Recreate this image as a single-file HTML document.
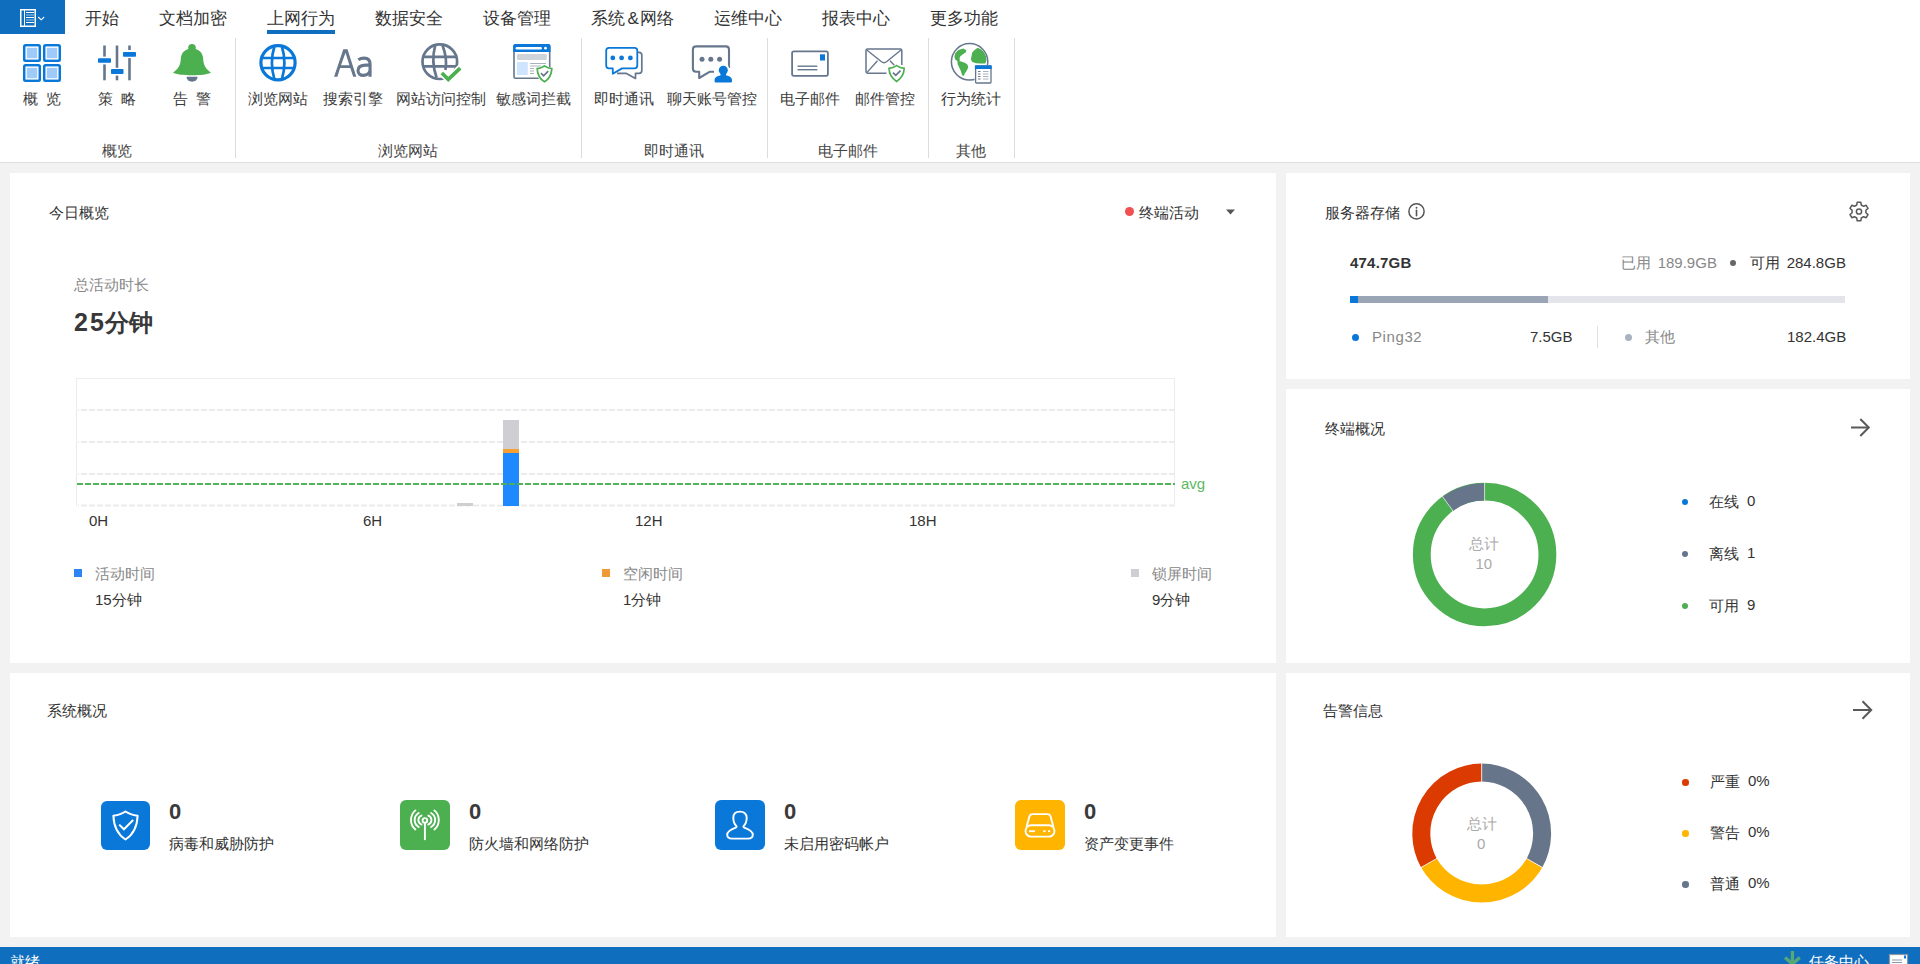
<!DOCTYPE html><html><head><meta charset="utf-8"><style>
html,body{margin:0;padding:0}
body{width:1920px;height:964px;position:relative;overflow:hidden;background:#f2f2f2;font-family:"Liberation Sans",sans-serif;color:#333}
.t{position:absolute;white-space:nowrap;line-height:1}
.a{position:absolute}
svg{position:absolute;overflow:visible}
#top{position:absolute;left:0;top:0;width:1920px;height:162px;background:#fff;border-bottom:1px solid #dedede}
.tab{font-size:17px;top:10px;color:#333}
.lbl{font-size:15px;top:91px;color:#3c3c3c}
.grp{font-size:15px;top:143px;color:#444}
.sep{position:absolute;top:38px;width:1px;height:120px;background:#dcdcdc}
.card{position:absolute;background:#fff}
</style></head><body>
<div id="top">
  <div class="a" style="left:0;top:0;width:65px;height:34px;background:#106ebe"></div>
  <svg style="left:0;top:0" width="65" height="34" viewBox="0 0 65 34">
    <rect x="20.75" y="9.75" width="14.5" height="16.5" fill="none" stroke="#fff" stroke-width="1.5"/>
    <line x1="24.5" y1="10" x2="24.5" y2="26" stroke="#fff" stroke-width="1"/>
    <g stroke="#fff" stroke-width="1">
      <line x1="26" y1="12.5" x2="34" y2="12.5"/><line x1="26" y1="15" x2="34" y2="15" stroke-opacity=".6"/>
      <line x1="26" y1="17.5" x2="34" y2="17.5"/><line x1="26" y1="20" x2="34" y2="20" stroke-opacity=".6"/>
      <line x1="26" y1="22.5" x2="34" y2="22.5"/>
    </g>
    <polyline points="38.2,17 41.2,19.8 44.2,17" fill="none" stroke="#fff" stroke-width="1.1"/>
  </svg>
  <div class="t tab" style="left:85px">开始</div>
  <div class="t tab" style="left:159px">文档加密</div>
  <div class="t tab" style="left:267px">上网行为</div>
  <div class="a" style="left:267px;top:30px;width:68px;height:4px;background:#106ebe"></div>
  <div class="t tab" style="left:375px">数据安全</div>
  <div class="t tab" style="left:483px">设备管理</div>
  <div class="t tab" style="left:591px">系统<span style="padding:0 1.5px 0 2.5px">&amp;</span>网络</div>
  <div class="t tab" style="left:714px">运维中心</div>
  <div class="t tab" style="left:822px">报表中心</div>
  <div class="t tab" style="left:930px">更多功能</div>

  <div class="sep" style="left:235px"></div>
  <div class="sep" style="left:581px"></div>
  <div class="sep" style="left:767px"></div>
  <div class="sep" style="left:928px"></div>
  <div class="sep" style="left:1014px"></div>

  <div class="t lbl" style="left:23px">概</div><div class="t lbl" style="left:46px">览</div>
  <div class="t lbl" style="left:98px">策</div><div class="t lbl" style="left:121px">略</div>
  <div class="t lbl" style="left:173px">告</div><div class="t lbl" style="left:196px">警</div>
  <div class="t lbl" style="left:248px">浏览网站</div>
  <div class="t lbl" style="left:323px">搜索引擎</div>
  <div class="t lbl" style="left:396px">网站访问控制</div>
  <div class="t lbl" style="left:496px">敏感词拦截</div>
  <div class="t lbl" style="left:594px">即时通讯</div>
  <div class="t lbl" style="left:667px">聊天账号管控</div>
  <div class="t lbl" style="left:780px">电子邮件</div>
  <div class="t lbl" style="left:855px">邮件管控</div>
  <div class="t lbl" style="left:941px">行为统计</div>

  <div class="t grp" style="left:102px">概览</div>
  <div class="t grp" style="left:378px">浏览网站</div>
  <div class="t grp" style="left:644px">即时通讯</div>
  <div class="t grp" style="left:818px">电子邮件</div>
  <div class="t grp" style="left:956px">其他</div>
    <svg style="left:0;top:0" width="1100" height="100" viewBox="0 0 1100 100">
    <!-- grid -->
    <g fill="#9ecbfa" stroke="#0a78d8" stroke-width="2.6">
      <rect x="24.3" y="45.3" width="15.4" height="15.4" rx="1.2"/>
      <rect x="44.3" y="45.3" width="15.4" height="15.4" rx="1.2"/>
      <rect x="24.3" y="65.3" width="15.4" height="15.4" rx="1.2"/>
      <rect x="44.3" y="65.3" width="15.4" height="15.4" rx="1.2"/>
    </g>
    <g fill="none" stroke="#fff" stroke-width="1.2">
      <rect x="26.2" y="47.2" width="11.6" height="11.6"/>
      <rect x="46.2" y="47.2" width="11.6" height="11.6"/>
      <rect x="26.2" y="67.2" width="11.6" height="11.6"/>
      <rect x="46.2" y="67.2" width="11.6" height="11.6"/>
    </g>
    <!-- sliders -->
    <g stroke="#66768c" stroke-width="2.6">
      <line x1="104.5" y1="45.5" x2="104.5" y2="56.6"/><line x1="104.5" y1="64.4" x2="104.5" y2="80.3"/>
      <line x1="117" y1="45.5" x2="117" y2="67.8"/><line x1="117" y1="75.6" x2="117" y2="80.3"/>
      <line x1="129.5" y1="45.5" x2="129.5" y2="50"/><line x1="129.5" y1="58.1" x2="129.5" y2="80.3"/>
    </g>
    <g fill="#0a78d8">
      <rect x="98" y="58.2" width="13" height="4.6" rx=".8"/>
      <rect x="111" y="69" width="12.5" height="5" rx=".8"/>
      <rect x="123" y="52" width="13" height="4.8" rx=".8"/>
    </g>
    <!-- bell -->
    <circle cx="192" cy="47.8" r="3.8" fill="#4caf50"/>
    <path d="M192 48.5 C186 48.5 181 52 180.8 59 C180.6 66 177 70 173 72.5 C176 74.6 184 75.2 192 75.2 C200 75.2 208 74.6 211 72.5 C207 70 203.4 66 203.2 59 C203 52 198 48.5 192 48.5 Z" fill="#4caf50"/>
    <path d="M186.5 76.8 L197.6 76.8 A5.55 5 0 0 1 186.5 76.8 Z" fill="#66768c"/>
    <!-- globe blue -->
    <g fill="none" stroke="#0a78d8">
      <circle cx="278" cy="62.8" r="17.1" stroke-width="3.2"/>
      <path d="M274.5 46 Q269.3 62.8 274.5 79.6" stroke-width="2.7"/>
      <path d="M281.8 46 Q287 62.8 281.8 79.6" stroke-width="2.7"/>
      <line x1="261" y1="57.9" x2="295" y2="57.9" stroke-width="2.5"/>
      <line x1="261" y1="67.9" x2="295" y2="67.9" stroke-width="2.5"/>
    </g>
    <!-- Aa -->
    <path fill="#66768c" fill-rule="evenodd" d="M334.1 76.7 L343.3 49.2 L347.5 49.2 L356.3 76.7 L353.2 76.7 L350.3 67.9 L340.1 67.9 L337.4 76.7 Z M341 65.2 L349.4 65.2 L345.5 52.7 Z"/>
    <g fill="none" stroke="#66768c" stroke-width="3.1">
      <path d="M358.3 59.7 C360 58.6 362 58.1 364.2 58.1 C368 58.1 370.05 60.2 370.05 64.2 L370.05 76.7"/>
      <path d="M370.05 65.1 L366 65.1 C360.6 65.1 358 67.4 358 70.6 C358 73.8 360.4 75.4 363.4 75.4 C366.6 75.4 368.9 73.6 370.05 71.2"/>
    </g>
    <!-- globe gray + check -->
    <g fill="none" stroke="#66768c" stroke-width="2.7">
      <circle cx="439.8" cy="61.7" r="17.3"/>
      <path d="M435.2 45.5 Q430.8 61.5 436.6 77.8"/>
      <path d="M442.6 45.5 Q447.6 59 445.4 70"/>
      <line x1="423" y1="56.8" x2="456.5" y2="56.8"/>
      <line x1="423" y1="66.4" x2="456.5" y2="66.4"/>
    </g>
    <polyline points="441.8,73 448.3,79.4 460.2,68.1" fill="none" stroke="#fff" stroke-width="7"/>
    <polyline points="441.8,73 448.3,79.4 460.2,68.1" fill="none" stroke="#4caf50" stroke-width="3.6"/>
    <!-- browser + shield -->
    <rect x="514" y="45" width="35.7" height="33.3" rx="1.5" fill="#fff" stroke="#66768c" stroke-width="1.6"/>
    <path d="M513.2 46 Q513.2 44.1 515.2 44.1 L548.5 44.1 Q550.5 44.1 550.5 46 L550.5 52 L513.2 52 Z" fill="#0a78d8"/>
    <rect x="515.6" y="46.9" width="26.3" height="2.6" rx="1.3" fill="#fff"/>
    <circle cx="545.5" cy="48.2" r="1.4" fill="#fff"/>
    <rect x="516.9" y="54" width="29.9" height="6" rx="1.2" fill="#cfd3da"/>
    <rect x="516.9" y="62" width="10.9" height="13.1" rx=".8" fill="#cfe5ff"/>
    <g stroke="#a9b2bf" stroke-width="1">
      <line x1="530" y1="63.5" x2="546" y2="63.5"/><line x1="530" y1="66" x2="541" y2="66"/>
      <line x1="530" y1="68.5" x2="534" y2="68.5"/><line x1="530" y1="71" x2="534" y2="71"/><line x1="530" y1="73.5" x2="534" y2="73.5"/>
    </g>
    <path d="M544.5 64.5 C541.5 66.5 539 67.2 535.5 67.5 C535.5 75 538.5 80 544.5 83.5 C550.5 80 553.5 75 553.5 67.5 C550 67.2 547.5 66.5 544.5 64.5 Z" fill="#fff"/>
    <path d="M544.5 66 C542 67.6 540 68.3 537.2 68.6 C537.4 75 540 79 544.5 81.8 C549 79 551.6 75 551.8 68.6 C549 68.3 547 67.6 544.5 66 Z" fill="#fff" stroke="#4caf50" stroke-width="1.7"/>
    <polyline points="541,73.2 543.6,75.8 548.2,71.2" fill="none" stroke="#66768c" stroke-width="1.7"/>
    <!-- chat blue -->
    <path d="M633 52.3 L639 52.3 Q641.8 52.3 641.8 55 L641.8 70.5 Q641.8 73.3 639 73.3 L635.5 73.3 L635.5 78.5 L626 73.3 L617 73.3" fill="none" stroke="#66768c" stroke-width="1.7" stroke-linejoin="round"/>
    <path d="M609 47.8 L634.5 47.8 Q637.3 47.8 637.3 50.6 L637.3 65.6 Q637.3 68.4 634.5 68.4 L622 68.4 L612.8 73.8 L612.8 68.4 L609 68.4 Q606.2 68.4 606.2 65.6 L606.2 50.6 Q606.2 47.8 609 47.8 Z" fill="#fff" stroke="#0a78d8" stroke-width="1.8" stroke-linejoin="round"/>
    <g fill="#0a78d8"><circle cx="612.8" cy="57.9" r="2.4"/><circle cx="621.6" cy="57.9" r="2.4"/><circle cx="630.4" cy="57.9" r="2.4"/></g>
    <!-- chat + user -->
    <path d="M695.5 46.4 L725.8 46.4 Q729 46.4 729 49.6 L729 68 M714 71.8 L709.5 71.8 L699.2 78 L699.2 71.8 L696 71.8 Q692.9 71.8 692.9 68.6 L692.9 49.6 Q692.9 46.4 696 46.4" fill="none" stroke="#66768c" stroke-width="2.1" stroke-linejoin="round"/>
    <g fill="#66768c"><circle cx="702" cy="59.3" r="2.5"/><circle cx="710.8" cy="59.3" r="2.5"/><circle cx="719.6" cy="59.3" r="2.5"/></g>
    <circle cx="723.3" cy="69.6" r="6" fill="#fff"/>
    <circle cx="723.3" cy="70.2" r="4.5" fill="#0a78d8"/>
    <path d="M720.8 73.5 L725.8 73.5 L726.3 75.6 C729.6 76.2 732 77.6 732 80.2 L732 81.5 Q732 82.6 730.8 82.6 L715.8 82.6 Q714.6 82.6 714.6 81.5 L714.6 80.2 C714.6 77.6 717 76.2 720.3 75.6 Z" fill="#0a78d8"/>
    <!-- envelope -->
    <rect x="792.1" y="51.3" width="35.8" height="24.6" rx="1.8" fill="none" stroke="#66768c" stroke-width="1.8"/>
    <rect x="820" y="54.3" width="5" height="6.2" fill="#0a78d8"/>
    <g stroke="#66768c" stroke-width="1.4"><line x1="797.5" y1="66.2" x2="817.3" y2="66.2"/><line x1="797.5" y1="69.7" x2="817.3" y2="69.7"/></g>
    <!-- envelope + shield -->
    <path d="M886.5 73.2 L867.6 73.2 Q866 73.2 866 71.6 L866 50.6 Q866 49 867.6 49 L900.2 49 Q901.8 49 901.8 50.6 L901.8 65" fill="none" stroke="#66768c" stroke-width="1.5"/>
    <path d="M866.8 50 L881.5 61.8 Q884 63.6 886.5 61.8 L901 50" fill="none" stroke="#66768c" stroke-width="1.4"/>
    <line x1="866.8" y1="72.6" x2="877.5" y2="60.8" stroke="#66768c" stroke-width="1.4"/>
    <line x1="890" y1="60.8" x2="895" y2="66" stroke="#66768c" stroke-width="1.4"/>
    <path d="M896.6 64 C893.5 66 891 66.8 887.2 67 C887.2 74.5 890.3 79.5 896.6 83 C902.9 79.5 906 74.5 906 67 C902.3 66.8 899.7 66 896.6 64 Z" fill="#fff"/>
    <path d="M896.6 65.6 C894 67.3 892 68 889 68.3 C889.2 74.3 891.8 78.5 896.6 81.4 C901.4 78.5 904 74.3 904.2 68.3 C901.2 68 899.2 67.3 896.6 65.6 Z" fill="#fff" stroke="#4caf50" stroke-width="1.7"/>
    <polyline points="893,72.6 895.8,75.4 900.5,70.7" fill="none" stroke="#66768c" stroke-width="1.7"/>
    <!-- green globe + table -->
    <circle cx="969.6" cy="61.8" r="18.2" fill="none" stroke="#66768c" stroke-width="1.5"/>
    <g fill="#4caf50">
      <path d="M963.2 48.4 L966.4 50.2 L965.6 52.6 L962.6 54.6 L960.4 56.2 L959.4 58.4 L960.2 60.4 L957.6 61.2 L955.2 59.4 L954.4 56.6 L955.4 53 L958.4 50 Z"/>
      <path d="M957.4 60.8 L961.2 61.6 L964.8 62.8 L967.6 64.8 L968.2 67.4 L966.8 70.4 L964.8 73.4 L963.8 75.8 L962 75.2 L961 71.2 L959.2 67.4 L957.6 64 Z"/>
      <path d="M977.6 47.8 L981.2 49.4 L984.2 52.4 L986 56.6 L986.4 60.8 L985.2 63.4 L981 63.6 L976.2 63.2 L972.2 62 L970.8 59.2 L971.6 56 L972.2 52.6 L974.6 50 Z"/>
    </g>
    <rect x="974.5" y="65" width="17.5" height="19" fill="#fff"/>
    <rect x="975.6" y="66" width="15.4" height="17" rx=".8" fill="#fff" stroke="#66768c" stroke-width="1.3"/>
    <rect x="974.9" y="65.4" width="16.8" height="3.6" fill="#0a78d8"/>
    <g stroke="#66768c" stroke-width="1"><line x1="978" y1="71.5" x2="980.5" y2="71.5"/><line x1="978" y1="74" x2="980.5" y2="74"/><line x1="978" y1="76.5" x2="980.5" y2="76.5"/><line x1="978" y1="79" x2="980.5" y2="79"/></g>
    <g stroke="#a9b2bf" stroke-width="1"><line x1="983" y1="71.5" x2="988.5" y2="71.5"/><line x1="983" y1="74" x2="988.5" y2="74"/><line x1="983" y1="76.5" x2="988.5" y2="76.5"/><line x1="983" y1="79" x2="988.5" y2="79"/></g>
  </svg>

</div>
<div class="card" style="left:10px;top:173px;width:1266px;height:490px"></div>
<div class="card" style="left:1286px;top:173px;width:624px;height:206px"></div>
<div class="card" style="left:1286px;top:389px;width:624px;height:274px"></div>
<div class="card" style="left:10px;top:673px;width:1266px;height:264px"></div>
<div class="card" style="left:1286px;top:673px;width:624px;height:264px"></div>

<!-- card 1 -->
<div class="t" style="left:49px;top:205px;font-size:15px;color:#333">今日概览</div>
<div class="a" style="left:1125px;top:207px;width:9px;height:9px;border-radius:50%;background:#f0504f"></div>
<div class="t" style="left:1139px;top:205px;font-size:15px;color:#333">终端活动</div>
<svg style="left:1225px;top:208px" width="11" height="8"><polygon points="1,1.5 10,1.5 5.5,6.5" fill="#555"/></svg>
<div class="t" style="left:74px;top:277px;font-size:15px;color:#888">总活动时长</div>
<div class="t" style="left:74px;top:310px;font-size:25px;font-weight:bold;color:#383838;letter-spacing:2px">25</div><div class="t" style="left:105px;top:311px;font-size:24px;font-weight:bold;color:#383838">分钟</div>

<svg style="left:0;top:0" width="1280" height="620">
  <g stroke="#ececec" stroke-width="1">
    <line x1="76" y1="378.5" x2="1175" y2="378.5"/>
    <line x1="76.5" y1="378" x2="76.5" y2="506"/>
    <line x1="1174.5" y1="378" x2="1174.5" y2="506"/>
  </g>
  <g stroke="#ebebeb" stroke-width="1.8" stroke-dasharray="6 2" stroke-dashoffset="5">
    <line x1="78" y1="410" x2="1176" y2="410"/>
    <line x1="78" y1="442" x2="1176" y2="442"/>
    <line x1="78" y1="474" x2="1176" y2="474"/>
    <line x1="78" y1="505.5" x2="1176" y2="505.5"/>
  </g>
  <rect x="457" y="503" width="16" height="3" fill="#cfcfd3"/>
  <rect x="503" y="420" width="16" height="29" fill="#cfcfd3"/>
  <rect x="503" y="449" width="16" height="4" fill="#f7a030"/>
  <rect x="503" y="453" width="16" height="53" fill="#1e88ff"/>
  <line x1="77" y1="484" x2="1175" y2="484" stroke="#4caf50" stroke-width="2.2" stroke-dasharray="6 2" stroke-opacity=".95"/>
</svg>
<div class="t" style="left:1181px;top:476px;font-size:15px;color:#5cb860">avg</div>
<div class="t" style="left:89px;top:513px;font-size:15px;color:#333">0H</div>
<div class="t" style="left:363px;top:513px;font-size:15px;color:#333">6H</div>
<div class="t" style="left:635px;top:513px;font-size:15px;color:#333">12H</div>
<div class="t" style="left:909px;top:513px;font-size:15px;color:#333">18H</div>

<div class="a" style="left:74px;top:569px;width:8px;height:8px;background:#2c85f5"></div>
<div class="t" style="left:95px;top:566px;font-size:15px;color:#888">活动时间</div>
<div class="t" style="left:95px;top:592px;font-size:15px;color:#333">15分钟</div>
<div class="a" style="left:602px;top:569px;width:8px;height:8px;background:#ef9a36"></div>
<div class="t" style="left:623px;top:566px;font-size:15px;color:#888">空闲时间</div>
<div class="t" style="left:623px;top:592px;font-size:15px;color:#333">1分钟</div>
<div class="a" style="left:1131px;top:569px;width:8px;height:8px;background:#cfcfd3"></div>
<div class="t" style="left:1152px;top:566px;font-size:15px;color:#888">锁屏时间</div>
<div class="t" style="left:1152px;top:592px;font-size:15px;color:#333">9分钟</div>

<!-- storage card -->
<div class="t" style="left:1325px;top:205px;font-size:15px;color:#333">服务器存储</div>
<svg style="left:1405px;top:200px" width="24" height="24">
  <circle cx="11.5" cy="11.4" r="7.6" fill="none" stroke="#555" stroke-width="1.5"/>
  <line x1="11.5" y1="10.3" x2="11.5" y2="15.8" stroke="#555" stroke-width="1.6" stroke-linecap="round"/>
  <circle cx="11.5" cy="7.8" r="0.95" fill="#555"/>
</svg>
<svg style="left:1849px;top:201px" width="20" height="20" viewBox="0 0 20 20">
  <path d="M8.2 1.2 L11.8 1.2 L12.3 4 L14.6 5.3 L17.2 4.3 L19 7.4 L16.9 9.2 L16.9 11.8 L19 13.6 L17.2 16.7 L14.6 15.7 L12.3 17 L11.8 19.8 L8.2 19.8 L7.7 17 L5.4 15.7 L2.8 16.7 L1 13.6 L3.1 11.8 L3.1 9.2 L1 7.4 L2.8 4.3 L5.4 5.3 L7.7 4 Z" fill="none" stroke="#595959" stroke-width="1.5" stroke-linejoin="round"/>
  <circle cx="10" cy="10.5" r="2.6" fill="none" stroke="#595959" stroke-width="1.5"/>
</svg>
<div class="t" style="left:1350px;top:255px;font-size:15px;font-weight:bold;color:#333;letter-spacing:.2px">474.7GB</div>
<div class="t" style="left:1621px;top:255px;font-size:15px;color:#888">已用&#8202;&#8202; 189.9GB</div>
<div class="a" style="left:1730px;top:260px;width:6px;height:6px;border-radius:50%;background:#666"></div>
<div class="t" style="left:1750px;top:255px;font-size:15px;color:#333">可用&#8202;&#8202; 284.8GB</div>
<div class="a" style="left:1350px;top:296px;width:495px;height:7px;background:#e3e5ea"></div>
<div class="a" style="left:1350px;top:296px;width:198px;height:7px;background:#9aa5b5"></div>
<div class="a" style="left:1350px;top:296px;width:8px;height:7px;background:#0a78d8"></div>
<div class="a" style="left:1352px;top:334px;width:7px;height:7px;border-radius:50%;background:#0a78d8"></div>
<div class="t" style="left:1372px;top:329px;font-size:15px;color:#888;letter-spacing:.6px">Ping32</div>
<div class="t" style="left:1530px;top:329px;font-size:15px;color:#333">7.5GB</div>
<div class="a" style="left:1597px;top:326px;width:1px;height:22px;background:#e0e0e0"></div>
<div class="a" style="left:1625px;top:334px;width:7px;height:7px;border-radius:50%;background:#a9b2bf"></div>
<div class="t" style="left:1645px;top:329px;font-size:15px;color:#888">其他</div>
<div class="t" style="left:1787px;top:329px;font-size:15px;color:#333">182.4GB</div>

<!-- terminal card -->
<div class="t" style="left:1325px;top:421px;font-size:15px;color:#333">终端概况</div>
<svg style="left:1848px;top:416px" width="24" height="24" viewBox="0 0 24 24">
  <g fill="none" stroke="#595959" stroke-width="2" stroke-linecap="butt" stroke-linejoin="miter">
    <line x1="3" y1="11.5" x2="20" y2="11.5"/><polyline points="12.3,3 20.8,11.5 12.3,20"/>
  </g>
</svg>
<svg style="left:1400px;top:470px" width="170" height="170" viewBox="0 0 170 170">
  <circle cx="84.6" cy="84.5" r="62.8" fill="none" stroke="#4caf50" stroke-width="17.8"/>
  <path d="M84.6 13.2 A71.3 71.3 0 0 0 42.7 26.8 L53 40.9 A53.9 53.9 0 0 1 84.6 30.6 Z" fill="#67758a"/>
  <g stroke="#fff" stroke-width=".7"><line x1="84.6" y1="12" x2="84.6" y2="31.5"/><line x1="42" y1="25.8" x2="53.6" y2="41.7"/></g>
</svg>
<div class="t" style="left:1469px;top:536px;font-size:15px;color:#aaa">总计</div>
<div class="t" style="left:1475.5px;top:556px;font-size:15px;color:#aaa">10</div>
<div class="a" style="left:1681.7px;top:498.7px;width:6.6px;height:6.6px;border-radius:50%;background:#0a78d8"></div>
<div class="t" style="left:1709px;top:494px;font-size:15px;color:#333">在线</div><div class="t" style="left:1747px;top:493px;font-size:15px;color:#333">0</div>
<div class="a" style="left:1681.7px;top:550.7px;width:6.6px;height:6.6px;border-radius:50%;background:#67758a"></div>
<div class="t" style="left:1709px;top:546px;font-size:15px;color:#333">离线</div><div class="t" style="left:1747px;top:545px;font-size:15px;color:#333">1</div>
<div class="a" style="left:1681.7px;top:602.7px;width:6.6px;height:6.6px;border-radius:50%;background:#4caf50"></div>
<div class="t" style="left:1709px;top:598px;font-size:15px;color:#333">可用</div><div class="t" style="left:1747px;top:597px;font-size:15px;color:#333">9</div>

<!-- alert card -->
<div class="t" style="left:1323px;top:703px;font-size:15px;color:#333">告警信息</div>
<svg style="left:1850px;top:698px" width="24" height="24" viewBox="0 0 24 24">
  <g fill="none" stroke="#595959" stroke-width="2">
    <line x1="3" y1="12" x2="20.5" y2="12"/><polyline points="12.5,3.3 21.2,12 12.5,20.7"/>
  </g>
</svg>
<svg style="left:1400px;top:750px" width="170" height="170" viewBox="0 0 170 170">
  <g fill="none" stroke-width="18">
    <path d="M81.7 22.5 A61 61 0 0 1 134.5 113.0" stroke="#67758a"/>
    <path d="M134.5 113.0 A61 61 0 0 1 28.9 113.0" stroke="#ffb400"/>
    <path d="M28.9 113.0 A61 61 0 0 1 81.7 22.5" stroke="#db3b00"/>
  </g>
  <g stroke="#fff" stroke-width=".8">
    <line x1="81.7" y1="12.5" x2="81.7" y2="32"/>
    <line x1="125.8" y1="108" x2="143.2" y2="118"/>
    <line x1="37.6" y1="108" x2="20.2" y2="118"/>
  </g>
</svg>
<div class="t" style="left:1467px;top:816px;font-size:15px;color:#aaa">总计</div>
<div class="t" style="left:1477px;top:836px;font-size:15px;color:#aaa">0</div>
<div class="a" style="left:1682.4px;top:779px;width:6.6px;height:6.6px;border-radius:50%;background:#db3b00"></div>
<div class="t" style="left:1710px;top:774px;font-size:15px;color:#333">严重</div><div class="t" style="left:1748px;top:773px;font-size:15px;color:#333">0%</div>
<div class="a" style="left:1682.4px;top:830px;width:6.6px;height:6.6px;border-radius:50%;background:#ffb400"></div>
<div class="t" style="left:1710px;top:825px;font-size:15px;color:#333">警告</div><div class="t" style="left:1748px;top:824px;font-size:15px;color:#333">0%</div>
<div class="a" style="left:1682.4px;top:881px;width:6.6px;height:6.6px;border-radius:50%;background:#67758a"></div>
<div class="t" style="left:1710px;top:876px;font-size:15px;color:#333">普通</div><div class="t" style="left:1748px;top:875px;font-size:15px;color:#333">0%</div>

<!-- system card -->
<div class="t" style="left:47px;top:703px;font-size:15px;color:#333">系统概况</div>
<div class="a" style="left:101px;top:801px;width:49px;height:49px;border-radius:6px;background:#0a78d8"></div>
<svg style="left:101px;top:801px" width="49" height="49" viewBox="0 0 49 49">
  <path d="M24.5 10.5 C21 12.8 17 14 12.4 14.8 C12.8 26.5 16.5 33.5 24.5 38.5 C32.5 33.5 36.2 26.5 36.6 14.8 C32 14 28 12.8 24.5 10.5 Z" fill="none" stroke="#fff" stroke-width="2" stroke-linejoin="round"/>
  <polyline points="18.2,23.6 22.9,28.3 32.2,19" fill="none" stroke="#fff" stroke-width="2"/>
</svg>
<div class="t" style="left:169px;top:801px;font-size:22px;font-weight:bold;color:#3a3a3a">0</div>
<div class="t" style="left:169px;top:836px;font-size:15px;color:#333">病毒和威胁防护</div>

<div class="a" style="left:400px;top:800px;width:50px;height:50px;border-radius:6px;background:#4caf50"></div>
<svg style="left:400px;top:800px" width="50" height="50" viewBox="0 0 50 50">
  <g fill="none" stroke="#fff" stroke-width="1.9" stroke-linecap="round">
    <circle cx="24.9" cy="20.4" r="2.3"/>
    <line x1="24.9" y1="23" x2="24.9" y2="39.2"/>
    <path d="M21.5 15.6 A4.8 4.8 0 0 0 21.5 24.6"/><path d="M28.3 15.6 A4.8 4.8 0 0 1 28.3 24.6"/>
    <path d="M18.7 13 A8.1 8.1 0 0 0 18.7 27"/><path d="M31.1 13 A8.1 8.1 0 0 1 31.1 27"/>
    <path d="M15.4 10.4 A12.6 12.6 0 0 0 15.4 29.5"/><path d="M34.4 10.4 A12.6 12.6 0 0 1 34.4 29.5"/>
  </g>
</svg>
<div class="t" style="left:469px;top:801px;font-size:22px;font-weight:bold;color:#3a3a3a">0</div>
<div class="t" style="left:469px;top:836px;font-size:15px;color:#333">防火墙和网络防护</div>

<div class="a" style="left:715px;top:800px;width:50px;height:50px;border-radius:6px;background:#0a78d8"></div>
<svg style="left:715px;top:800px" width="50" height="50" viewBox="0 0 50 50">
  <path d="M25 11.6 C21 11.6 18.3 13.8 18.3 17.8 C18.3 21 19.3 24 21.3 26 C21.8 26.5 21.5 27.4 20.8 27.7 C16.5 29.3 12.2 31 12.2 34.8 C12.2 37.5 14 38.6 17 38.6 L33 38.6 C36 38.6 37.8 37.5 37.8 34.8 C37.8 31 33.5 29.3 29.2 27.7 C28.5 27.4 28.2 26.5 28.7 26 C30.7 24 31.7 21 31.7 17.8 C31.7 13.8 29 11.6 25 11.6 Z" fill="none" stroke="#fff" stroke-width="1.9" stroke-linejoin="round"/>
</svg>
<div class="t" style="left:784px;top:801px;font-size:22px;font-weight:bold;color:#3a3a3a">0</div>
<div class="t" style="left:784px;top:836px;font-size:15px;color:#333">未启用密码帐户</div>

<div class="a" style="left:1015px;top:800px;width:50px;height:50px;border-radius:6px;background:#ffb400"></div>
<svg style="left:1015px;top:800px" width="50" height="50" viewBox="0 0 50 50">
  <path d="M11.6 26.8 L14.4 16.4 C14.9 14.6 16 14.1 17.8 14.1 L32.2 14.1 C34 14.1 35.1 14.6 35.6 16.4 L38.4 26.8" fill="none" stroke="#fff" stroke-width="1.9" stroke-linejoin="round"/>
  <rect x="10.5" y="25.3" width="29" height="11.3" rx="5.6" fill="none" stroke="#fff" stroke-width="1.9"/>
  <g stroke="#fff" stroke-width="1.8"><line x1="14" y1="31.2" x2="20" y2="31.2"/><line x1="28.2" y1="31.2" x2="30.6" y2="31.2"/><line x1="33" y1="31.2" x2="35.2" y2="31.2"/></g>
</svg>
<div class="t" style="left:1084px;top:801px;font-size:22px;font-weight:bold;color:#3a3a3a">0</div>
<div class="t" style="left:1084px;top:836px;font-size:15px;color:#333">资产变更事件</div>

<!-- status bar -->
<div class="a" style="left:0;top:947px;width:1920px;height:17px;background:#106ebe;overflow:hidden">
  <div class="t" style="left:10px;top:7px;font-size:15px;color:#fff">就绪</div>
  <svg style="left:1783px;top:4px" width="18" height="14" viewBox="0 0 18 14">
    <g stroke="#55a878" stroke-width="3.3" fill="none"><line x1="9.4" y1="0" x2="9.4" y2="14"/><polyline points="2,6.6 9.4,13 16.8,6.6"/></g>
  </svg>
  <div class="t" style="left:1809px;top:7px;font-size:15px;color:#fff">任务中心</div>
  <svg style="left:1888px;top:6px" width="22" height="14" viewBox="0 0 22 14">
    <rect x="1.5" y="1.5" width="18" height="14" fill="#fff" stroke="#8a97a8" stroke-width="1.2"/>
    <rect x="16" y="2.5" width="2" height="3" fill="#0a78d8"/>
    <g stroke="#8a97a8" stroke-width="1"><line x1="4" y1="7" x2="14" y2="7"/><line x1="4" y1="9.5" x2="14" y2="9.5"/></g>
  </svg>
</div>

</body></html>
